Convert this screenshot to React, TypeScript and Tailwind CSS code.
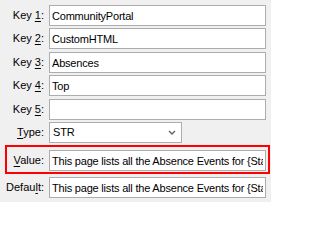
import React from "react"

const font = { fontFamily: '"Liberation Sans", Arial, sans-serif' }

function Label({ pre, u, post }: { pre: string; u: string; post: string }) {
  return (
    <div className="w-[49px] shrink-0 pr-[5px] text-right whitespace-nowrap">
      {pre}
      <span className="underline underline-offset-[2px]">{u}</span>
      {post}
    </div>
  )
}

function Field({ value }: { value: string }) {
  return (
    <input
      readOnly
      value={value}
      className="h-[21px] w-[217px] border border-[#adadad] bg-white px-[2px] text-[11px] tracking-[-0.2px] text-black outline-none"
      style={font}
    />
  )
}

export default function App() {
  const keys = ["CommunityPortal", "CustomHTML", "Absences", "Top", ""]
  const tops = ["mt-[5px]", "mt-[2px]", "mt-[3px]", "mt-[2px]", "mt-[3px]"]
  const text = "This page lists all the Absence Events for {StartDate} to {EndDate}"

  return (
    <div className="h-[202px] w-[271px] overflow-hidden bg-[#f0f0f0] text-[11px] text-black" style={font}>
      <div className="flex flex-col">
        {keys.map((k, i) => (
          <div key={i} className={`flex items-center ${tops[i]}`}>
            <Label pre="Key " u={String(i + 1)} post=":" />
            <Field value={k} />
          </div>
        ))}

        <div className="mt-[2px] flex items-center">
          <Label pre="" u="T" post="ype:" />
          <div className="flex h-[21px] w-[133px] items-center justify-between border border-[#adadad] bg-white pl-[3px] pr-[5px] tracking-[-0.2px]">
            <span>STR</span>
            <svg width="8" height="5" viewBox="0 0 8 5">
              <path d="M1 1 L4 4 L7 1" fill="none" stroke="#606060" strokeWidth="1.4" />
            </svg>
          </div>
        </div>

        <div className="relative mt-[7px] flex items-center">
          <div className="pointer-events-none absolute left-[5px] top-[-5px] h-[29px] w-[265px] border-2 border-[#ff0000]" />
          <Label pre="" u="V" post="alue:" />
          <Field value={text} />
        </div>

        <div className="mt-[6px] flex items-center">
          <Label pre="Defau" u="l" post="t:" />
          <Field value={text} />
        </div>
      </div>
    </div>
  )
}
